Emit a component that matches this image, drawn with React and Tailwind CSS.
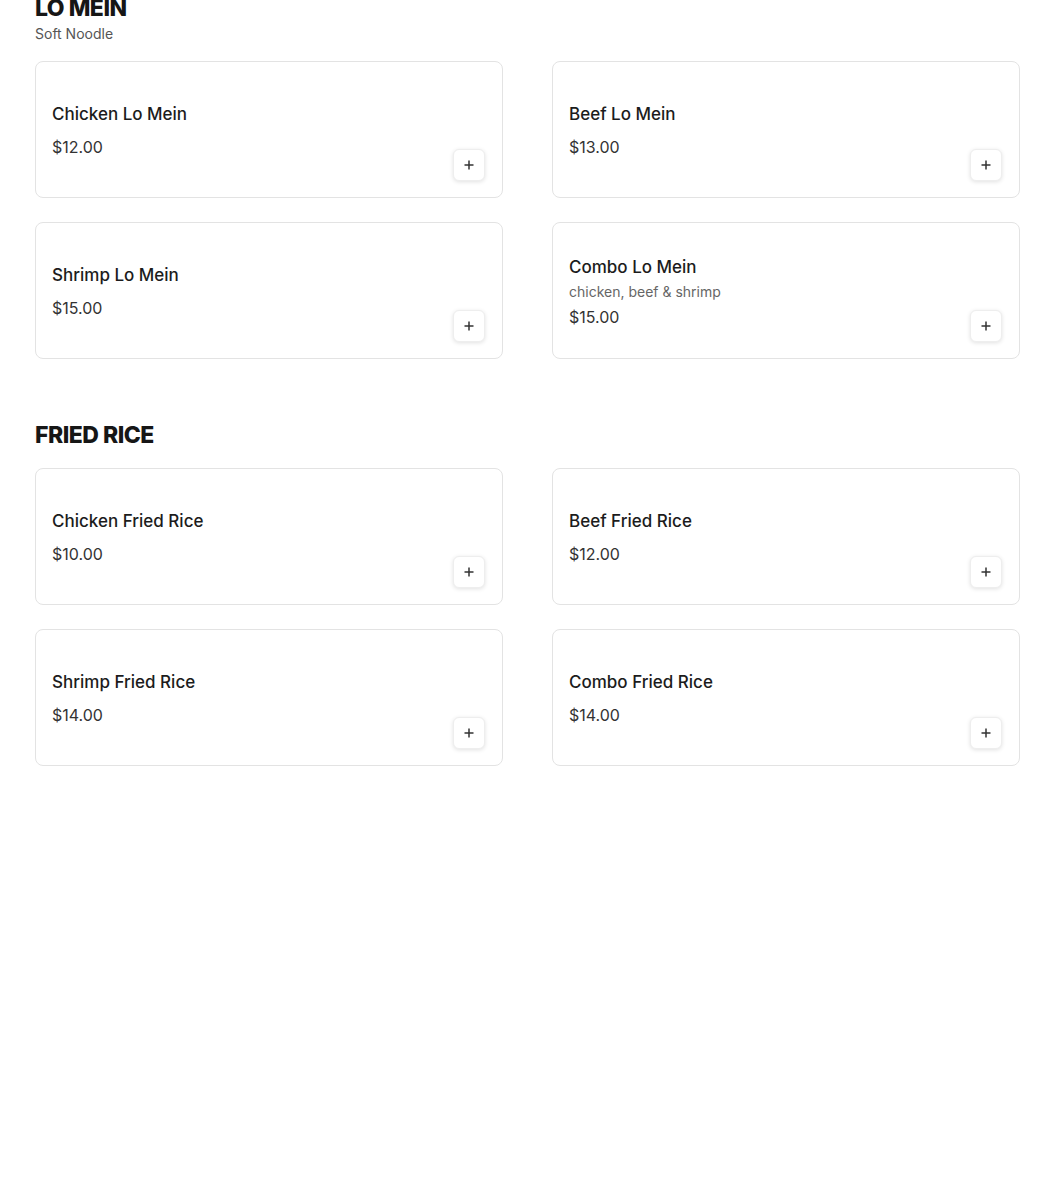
import React from "react";

const sections = [
  {
    title: "LO MEIN",
    subtitle: "Soft Noodle",
    items: [
      { name: "Chicken Lo Mein", price: "$12.00" },
      { name: "Beef Lo Mein", price: "$13.00" },
      { name: "Shrimp Lo Mein", price: "$15.00" },
      { name: "Combo Lo Mein", desc: "chicken, beef & shrimp", price: "$15.00" },
    ],
  },
  {
    title: "FRIED RICE",
    items: [
      { name: "Chicken Fried Rice", price: "$10.00" },
      { name: "Beef Fried Rice", price: "$12.00" },
      { name: "Shrimp Fried Rice", price: "$14.00" },
      { name: "Combo Fried Rice", price: "$14.00" },
    ],
  },
];

const MenuCard = ({ item }) => (
  <div className="flex h-[137px] rounded-lg border border-[#e3e3e3] bg-white p-4">
    <div className="flex flex-1 flex-col justify-center pt-[2px]">
      <h3 className="text-[17px] font-medium leading-6 text-[#1c1c1c]">{item.name}</h3>
      {item.desc && (
        <p className="mt-[3px] text-[14px] leading-5 text-[#666]">{item.desc}</p>
      )}
      <p className={`${item.desc ? "mt-[3px]" : "mt-[9px]"} text-[16px] leading-6 text-[#333]`}>
        {item.price}
      </p>
    </div>
    <button
      type="button"
      className="mr-[1px] flex h-8 w-8 items-center justify-center self-end rounded-md border border-[#eeeeee] bg-white shadow-[0_1px_4px_rgba(0,0,0,0.12)]"
    >
      <svg width="12" height="12" viewBox="0 0 12 12" fill="none" stroke="#333" strokeWidth="1.5">
        <path d="M6 1.5v9M1.5 6h9" />
      </svg>
    </button>
  </div>
);

const App = () => {
  return (
    <div
      className="min-h-screen bg-white pl-[35px]"
      style={{ fontFamily: "Inter, 'Noto Sans', sans-serif" }}
    >
      <div className="w-[985px] -mt-[8px]">
        {sections.map((section, i) => (
          <section key={section.title} className={i > 0 ? "mt-[60px]" : ""}>
            <h2 className="text-[23px] font-extrabold leading-8 tracking-[-0.5px] text-[#161616]">
              {section.title}
            </h2>
            {section.subtitle && (
              <p className="text-[14px] leading-5 text-[#555]">{section.subtitle}</p>
            )}
            <div className="mt-[17px] grid grid-cols-2 gap-x-[49px] gap-y-[24px]">
              {section.items.map((item) => (
                <MenuCard key={item.name} item={item} />
              ))}
            </div>
          </section>
        ))}
      </div>
    </div>
  );
};

export default App;
